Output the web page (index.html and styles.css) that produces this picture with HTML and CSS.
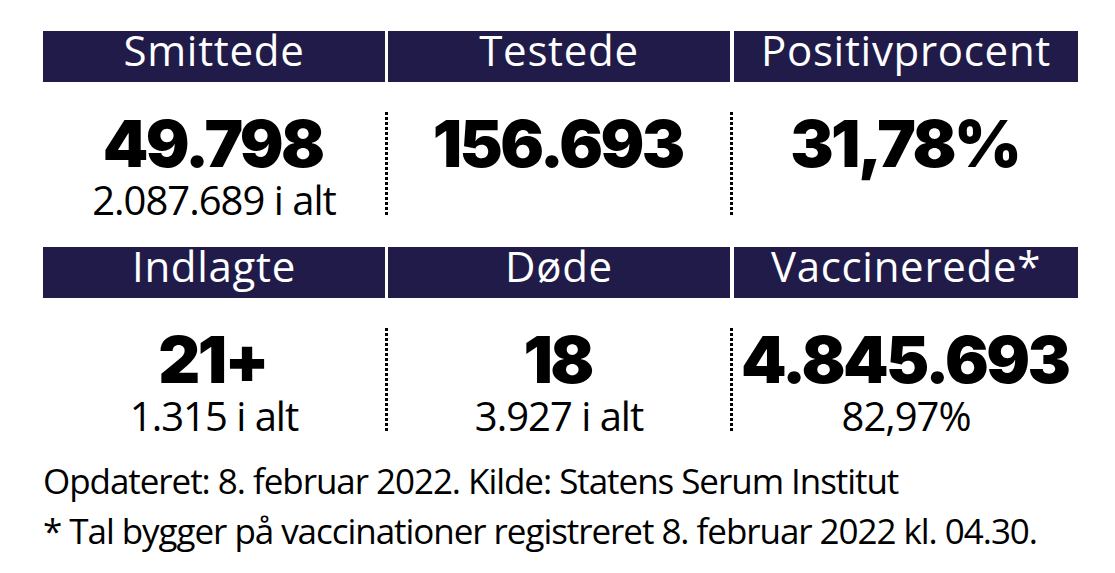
FILE: index.html
```html
<!DOCTYPE html>
<html lang="da">
<head>
<meta charset="utf-8">
<title>Covid-19 tal</title>
<link rel="stylesheet" href="styles.css">
</head>
<body>
<main class="board">
  <section class="block">
    <div class="bar c1">Smittede</div>
    <div class="bar c3">Testede</div>
    <div class="bar c5">Positivprocent</div>
    <div class="cell c1">
      <div class="num">49.798</div>
      <div class="sub">2.087.689 i alt</div>
    </div>
    <div class="sep c2"></div>
    <div class="cell c3">
      <div class="num">156.693</div>
    </div>
    <div class="sep c4"></div>
    <div class="cell c5">
      <div class="num">31,78%</div>
    </div>
  </section>
  <section class="block">
    <div class="bar c1">Indlagte</div>
    <div class="bar c3">Døde</div>
    <div class="bar c5">Vaccinerede*</div>
    <div class="cell c1">
      <div class="num">21+</div>
      <div class="sub">1.315 i alt</div>
    </div>
    <div class="sep c2"></div>
    <div class="cell c3">
      <div class="num">18</div>
      <div class="sub">3.927 i alt</div>
    </div>
    <div class="sep c4"></div>
    <div class="cell c5">
      <div class="num">4.845.693</div>
      <div class="sub">82,97%</div>
    </div>
  </section>
  <footer class="notes">
    <p>Opdateret: 8. februar 2022. Kilde: Statens Serum Institut</p>
    <p>* Tal bygger på vaccinationer registreret 8. februar 2022 kl. 04.30.</p>
  </footer>
</main>
</body>
</html>
```

FILE: styles.css
```css
html, body {
  margin: 0;
  padding: 0;
  background: #ffffff;
}

body {
  font-family: "Open Sans", "Noto Sans", "DejaVu Sans", sans-serif;
  color: #000000;
}

.board {
  width: 1035px;
  padding: 31px 0 0 43px;
}

.block {
  display: grid;
  grid-template-columns: 342px 3px 342px 4px 344px;
  grid-template-rows: 51px auto;
}

.c1 { grid-column: 1; }
.c2 { grid-column: 2; }
.c3 { grid-column: 3; }
.c4 { grid-column: 4; }
.c5 { grid-column: 5; }

.bar {
  grid-row: 1;
  background: #211b4a;
  color: #ffffff;
  font-size: 42px;
  line-height: 37px;
  text-align: center;
  letter-spacing: 0.7px;
  white-space: nowrap;
}

.cell {
  grid-row: 2;
  padding: 30px 0 0;
  text-align: center;
}

.block:first-child .cell {
  padding-bottom: 25px;
}

.sep {
  grid-row: 2;
  align-self: start;
  margin-top: 30px;
  width: 3px;
  height: 105px;
  background: repeating-linear-gradient(to bottom, #000 0 3px, transparent 3px 5px);
}

.num {
  font-family: "Inter", "Lato", sans-serif;
  font-weight: 900;
  font-size: 65px;
  line-height: 63px;
  letter-spacing: -2.6px;
  text-indent: -2.6px;
}

.sub {
  margin-top: 3px;
  font-size: 40px;
  line-height: 44px;
  letter-spacing: -1px;
}

.notes {
  margin-top: 18px;
  font-size: 35px;
  line-height: 50px;
  letter-spacing: -1.05px;
  white-space: nowrap;
}

.notes p {
  margin: 0;
}
```
